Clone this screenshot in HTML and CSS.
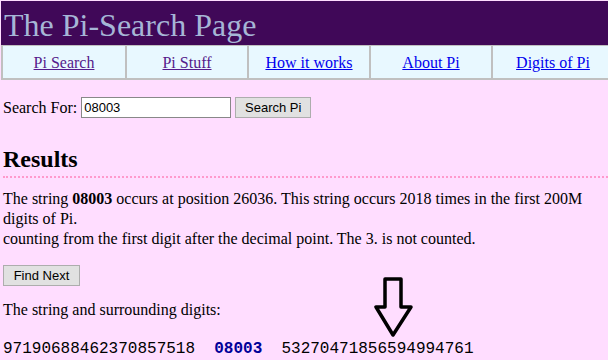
FILE: index.html
```html
<html lang="en">
<head>
    <meta charset="UTF-8">
    <title>The Pi-Search Page</title>
    <link rel="stylesheet" href="styles.css">
</head>
<body>
    <div class="header">The Pi-Search Page</div>
    <div class="nav">
        <a href="#" class="visited">Pi Search</a>
        <a href="#" class="visited">Pi Stuff</a>
        <a href="#">How it works</a>
        <a href="#">About Pi</a>
        <a href="#">Digits of Pi</a>
    </div>
    <form class="search">
        <label for="q">Search For:</label>
        <input type="text" id="q" value="08003" />
        <input type="button" value="Search Pi" class="btn" />
    </form>
    <h2>Results</h2>
    <p class="result">The string <b>08003</b> occurs at position 26036. This string occurs 2018 times in the first 200M digits of Pi.<br>counting from the first digit after the decimal point. The 3. is not counted.</p>
    <input type="button" value="Find Next" class="btn next" />
    <p class="surround">The string and surrounding digits:</p>
    <div class="digits">97190688462370857518  <b>08003</b>  53270471856594994761</div>
    <svg class="arrow" width="44" height="64" viewBox="0 0 44 64">
        <path d="M11 3 H27 V31 H37 L19 59 L2 31 H11 Z" fill="none" stroke="#000" stroke-width="3.5" stroke-linejoin="round"/>
    </svg>
</body>
</html>
```

FILE: styles.css
```css
*{
    box-sizing: border-box;
}
body{
    margin: 0;
    padding: 1px 0 0 1px;
    background-color: #ffddff;
    font-family: "Liberation Serif", "Times New Roman", serif;
    font-size: 16px;
    color: #000;
    position: relative;
    height: 360px;
    overflow: hidden;
}
.header{
    background-color: #400858;
    color: #a6b6d6;
    font-size: 32px;
    height: 44px;
    line-height: 44px;
    padding: 2px 0 0 3px;
}
.nav{
    display: grid;
    grid-template-columns: repeat(5,122px);
    width: 612px;
    background-color: #e8f8ff;
    border: 2px solid #c0c0c0;
    border-top: 1px solid #c0c0c0;
    height: 35px;
}
.nav a{
    text-align: center;
    line-height: 34px;
    color: #0000ee;
    border-left: 2px solid #c0c0c0;
}
.nav a:first-child{
    border-left: none;
}
.nav a.visited{
    color: #551a8b;
}
.search{
    margin: 17px 0 0 2px;
    display: flex;
    align-items: center;
}
.search label{
    margin-right: 4px;
}
.search input[type=text]{
    width: 150px;
    height: 21px;
    border: 1px solid #888;
    padding: 1px 2px;
    font-family: "Liberation Sans", Arial, sans-serif;
    font-size: 13px;
}
.btn{
    font-family: "Liberation Sans", Arial, sans-serif;
    font-size: 13px;
    background-color: #e1e1e1;
    border: 1px solid #adadad;
    height: 21px;
    padding: 0 8px;
}
.search .btn{
    margin-left: 4px;
    width: 76px;
}
h2{
    margin: 28px 0 0 2px;
    font-size: 24px;
    padding-bottom: 3px;
    border-bottom: 2px dotted #ff99cc;
}
.result{
    margin: 11px 0 0 2px;
    line-height: 20px;
    padding-right: 6px;
}
.next{
    margin: 16px 0 0 2px;
    width: 77px;
}
.surround{
    margin: 15px 0 0 2px;
}
.digits{
    margin: 21px 0 0 2px;
    font-family: "Liberation Mono", "Courier New", monospace;
    font-size: 16px;
    white-space: pre;
}
.digits b{
    color: #000099;
}
.arrow{
    position: absolute;
    left: 374px;
    top: 276px;
}
```
